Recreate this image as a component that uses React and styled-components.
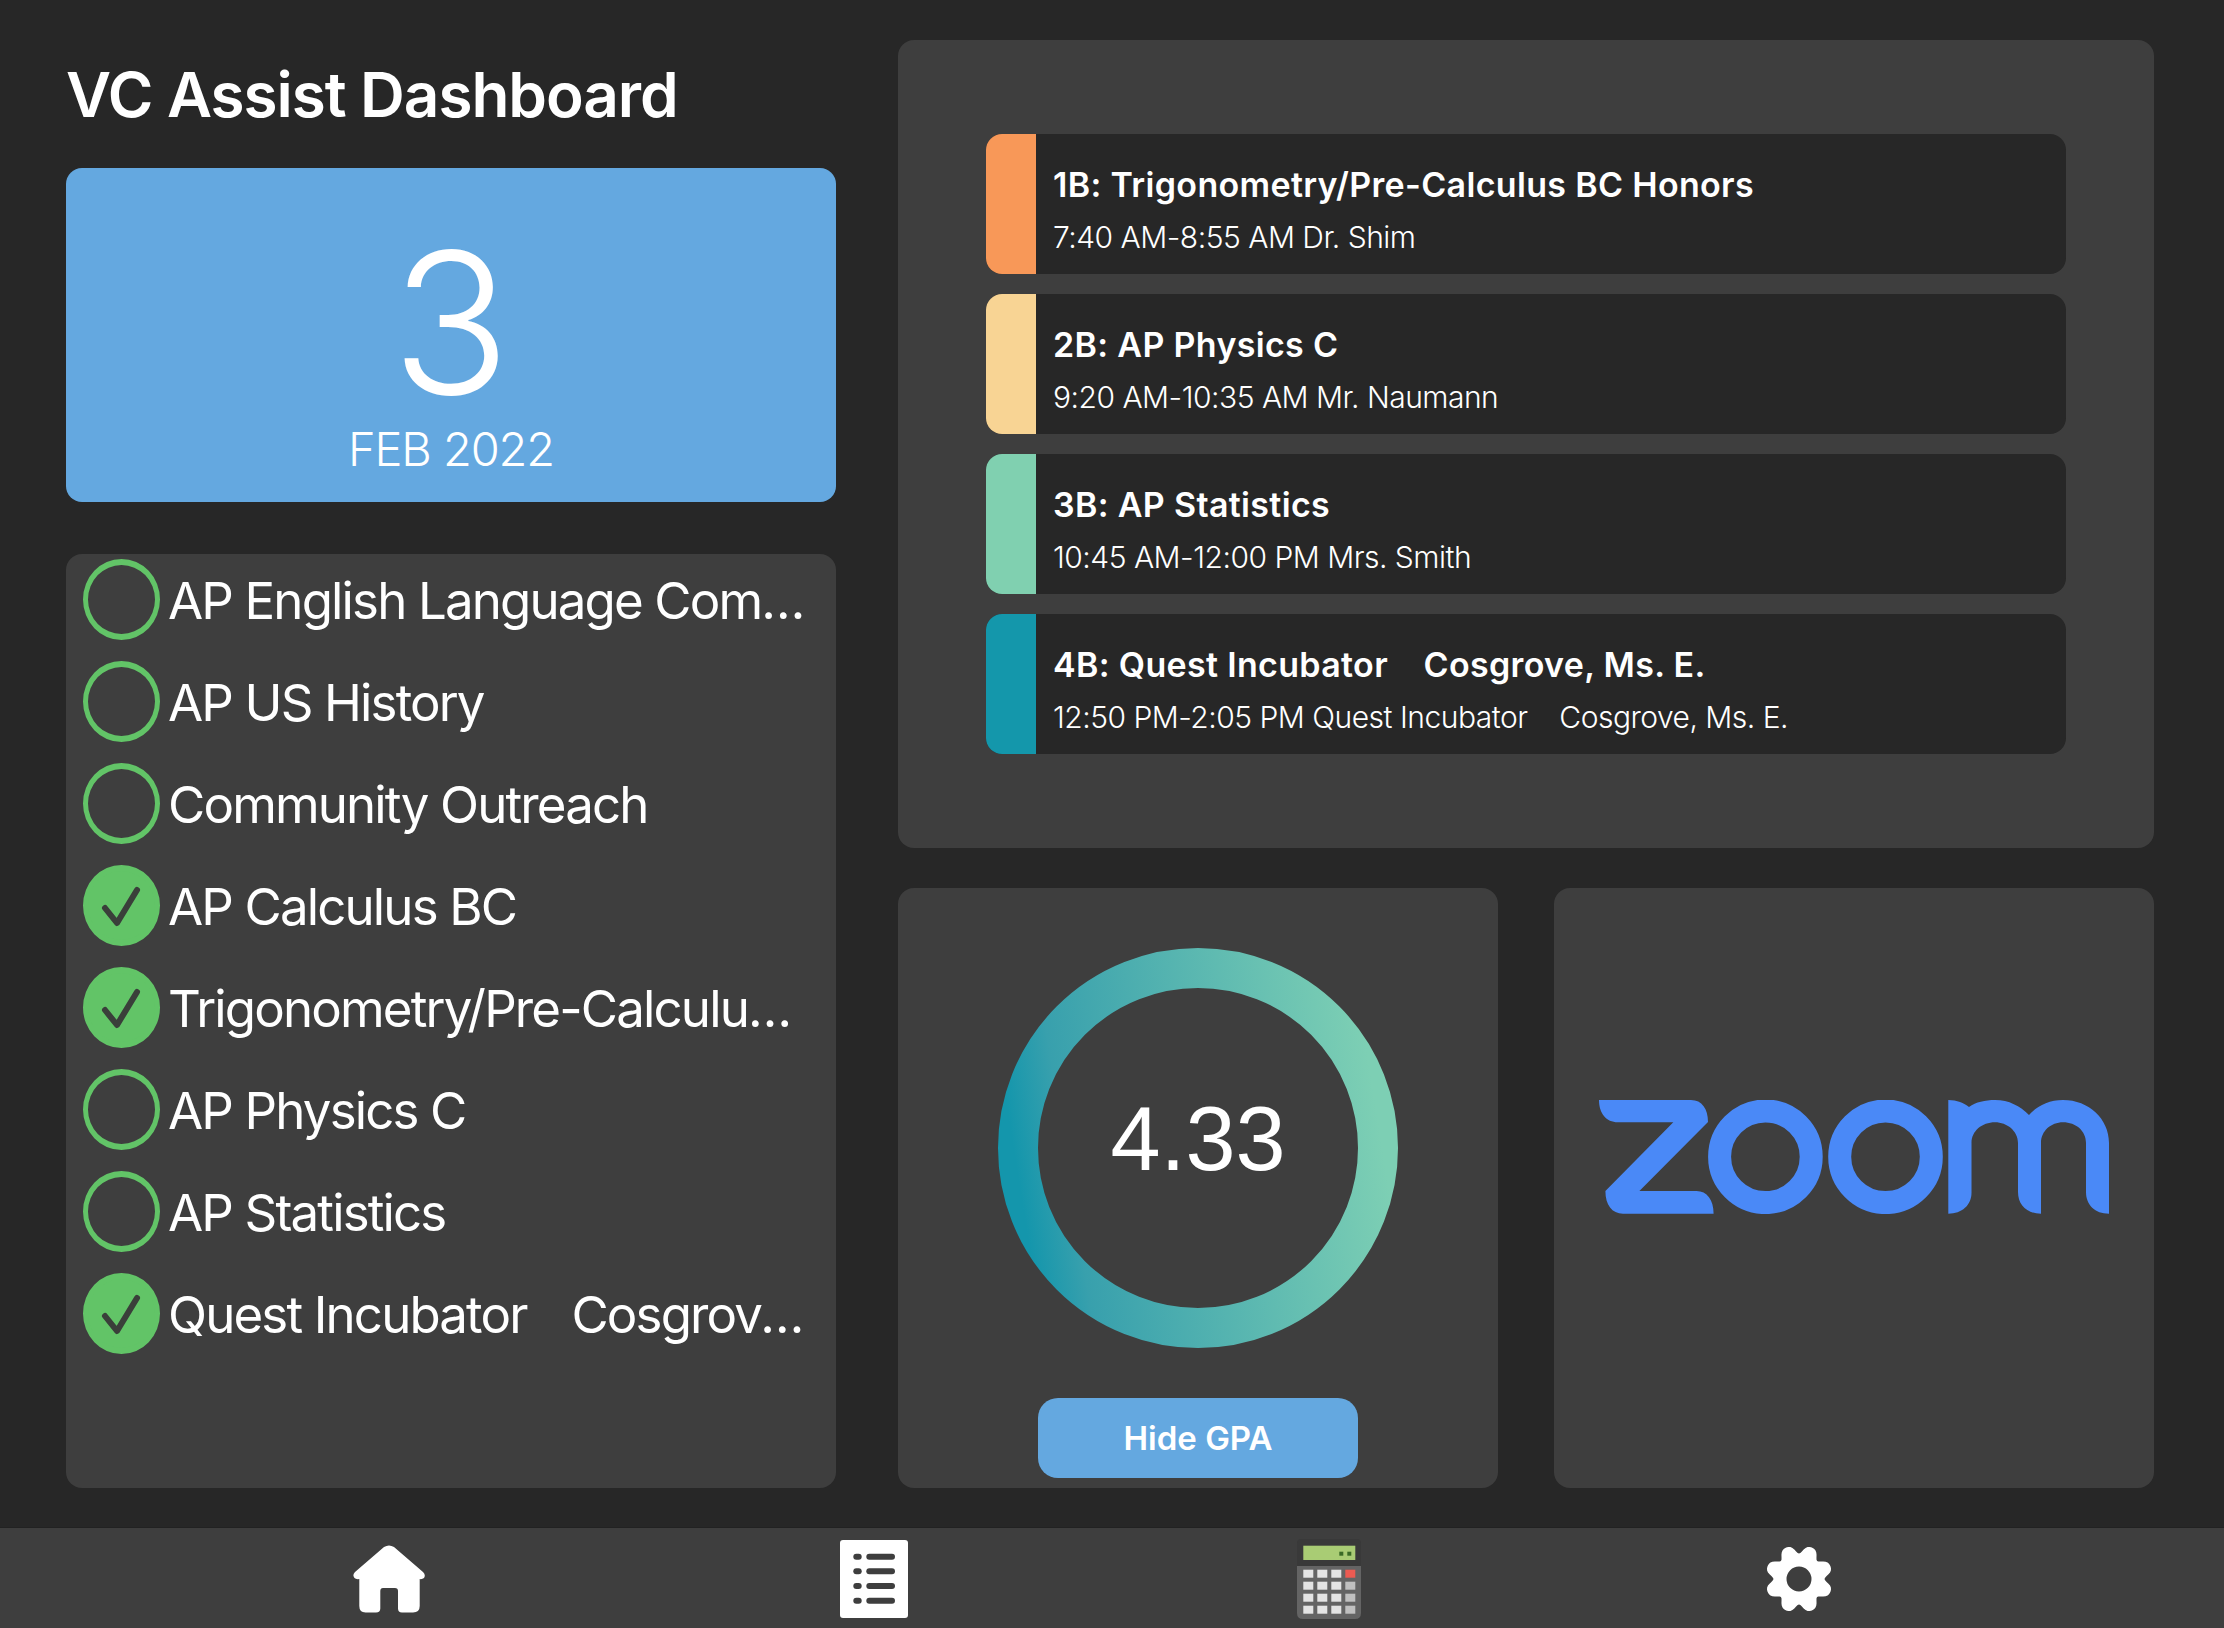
import React from "react";
import styled, { createGlobalStyle } from "styled-components";

const GlobalStyle = createGlobalStyle`
  html, body {
    margin: 0;
    padding: 0;
    background: #272727;
  }
  body {
    font-family: Inter, "Liberation Sans", sans-serif;
    color: #ffffff;
  }
`;

const Page = styled.div`
  display: flex;
  flex-direction: column;
  width: 2224px;
  height: 1628px;
  overflow: hidden;
`;

const Main = styled.main`
  display: grid;
  grid-template-columns: 770px 1256px;
  column-gap: 62px;
  height: 1527px;
  padding: 40px 70px 39px 66px;
  box-sizing: border-box;
`;

const LeftColumn = styled.section`
  display: flex;
  flex-direction: column;
`;

const RightColumn = styled.section`
  display: flex;
  flex-direction: column;
  gap: 40px;
`;

const Title = styled.h1`
  height: 128px;
  margin: 0;
  padding-top: 24px;
  box-sizing: border-box;
  font-size: 62px;
  line-height: 62px;
  font-weight: 600;
  letter-spacing: -1.05px;
`;

const DateCard = styled.div`
  display: flex;
  flex-direction: column;
  align-items: center;
  height: 334px;
  padding-top: 57px;
  box-sizing: border-box;
  background: #64a8e0;
  border-radius: 16px;
`;

const DateNumber = styled.div`
  font-size: 196px;
  line-height: 196px;
  font-weight: 300;
`;

const DateMonth = styled.div`
  margin-top: 4px;
  font-size: 47px;
  line-height: 47px;
  font-weight: 300;
  letter-spacing: -1.1px;
`;

const TaskCard = styled.div`
  display: flex;
  flex-direction: column;
  gap: 21px;
  height: 934px;
  margin-top: 52px;
  padding: 5px 0 0 17px;
  box-sizing: border-box;
  background: #3e3e3e;
  border-radius: 16px;
`;

const TaskRow = styled.div`
  display: flex;
  align-items: center;
  gap: 8px;
  height: 81px;
`;

const TaskCircle = styled.div`
  flex: none;
  display: flex;
  width: 77px;
  height: 81px;
  box-sizing: border-box;
  border-style: solid;
  border-color: #62c467;
  border-width: 6px 5px;
  border-radius: 50%;
  background: ${(p) => (p.$done ? "#62c467" : "transparent")};
`;

const TaskName = styled.div`
  width: 640px;
  padding-top: 2px;
  font-size: 51px;
  font-weight: 400;
  line-height: 62px;
  letter-spacing: -1.85px;
  white-space: pre;
  overflow: hidden;
  text-overflow: ellipsis;
`;

const ScheduleCard = styled.div`
  display: flex;
  flex-direction: column;
  gap: 20px;
  height: 808px;
  padding: 94px 88px 0 88px;
  box-sizing: border-box;
  background: #3e3e3e;
  border-radius: 16px;
`;

const ClassRow = styled.div`
  display: flex;
  height: 140px;
  background: #272727;
  border-radius: 16px;
  overflow: hidden;
`;

const ClassColor = styled.div`
  flex: none;
  width: 50px;
  background: ${(p) => p.$color};
`;

const ClassInfo = styled.div`
  padding: 31px 0 0 17px;
`;

const ClassName = styled.div`
  font-size: 34px;
  line-height: 40px;
  font-weight: 600;
  letter-spacing: 0.33px;
  white-space: pre;
`;

const ClassTime = styled.div`
  margin-top: 14px;
  font-size: 30px;
  line-height: 36px;
  font-weight: 300;
  letter-spacing: -0.5px;
  white-space: pre;
`;

const BottomRow = styled.div`
  display: grid;
  grid-template-columns: 600px 600px;
  column-gap: 56px;
  height: 600px;
`;

const GpaCard = styled.div`
  display: flex;
  flex-direction: column;
  align-items: center;
  padding-top: 60px;
  box-sizing: border-box;
  background: #3e3e3e;
  border-radius: 16px;
`;

const RingWrap = styled.div`
  display: grid;
  width: 400px;
  height: 400px;
  & > * {
    grid-area: 1 / 1;
  }
`;

const GpaValue = styled.div`
  justify-self: center;
  margin-top: 141px;
  font-family: "Liberation Sans", Arial, sans-serif;
  font-size: 90px;
  line-height: 100px;
`;

const HideButton = styled.button`
  width: 320px;
  height: 80px;
  margin-top: 50px;
  border: 0;
  border-radius: 20px;
  background: #64a8e0;
  color: #ffffff;
  font-family: inherit;
  font-size: 33px;
  font-weight: 600;
`;

const ZoomCard = styled.div`
  display: flex;
  justify-content: center;
  padding-top: 212px;
  box-sizing: border-box;
  background: #3e3e3e;
  border-radius: 16px;
`;

const TabBar = styled.nav`
  display: flex;
  align-items: center;
  height: 101px;
  padding: 1px 0 0 353px;
  box-sizing: border-box;
  background: #3e3e3e;
  border-top: 1px solid #222222;
`;

const Tab = styled.div`
  display: flex;
  margin-left: ${(p) => p.$gap || 0}px;
`;

const tasks = [
  { name: "AP English Language Composition", done: false },
  { name: "AP US History", done: false },
  { name: "Community Outreach", done: false },
  { name: "AP Calculus BC", done: true },
  { name: "Trigonometry/Pre-Calculus BC Honors", done: true },
  { name: "AP Physics C", done: false },
  { name: "AP Statistics", done: false },
  { name: "Quest Incubator   \u2009Cosgrove, Ms. E.", done: true },
];

const classes = [
  {
    color: "#f89858",
    name: "1B: Trigonometry/Pre-Calculus BC Honors",
    time: "7:40 AM-8:55 AM Dr. Shim",
  },
  {
    color: "#f8d494",
    name: "2B: AP Physics C",
    time: "9:20 AM-10:35 AM Mr. Naumann",
  },
  {
    color: "#80d0b0",
    name: "3B: AP Statistics",
    time: "10:45 AM-12:00 PM Mrs. Smith",
  },
  {
    color: "#1497ab",
    name: "4B: Quest Incubator    Cosgrove, Ms. E.",
    time: "12:50 PM-2:05 PM Quest Incubator    Cosgrove, Ms. E.",
  },
];

const Check = () => (
  <svg width="67" height="69" viewBox="0 1 67 69" fill="none">
    <path
      d="M17 38 L29 53 L49 20"
      stroke="#3a3f3a"
      strokeWidth="6"
      strokeLinecap="round"
      strokeLinejoin="round"
    />
  </svg>
);

const Ring = () => (
  <svg width="400" height="400" viewBox="0 0 400 400">
    <defs>
      <linearGradient id="gpa" x1="0" y1="0.58" x2="1" y2="0.42">
        <stop offset="0" stopColor="#1496ac" />
        <stop offset="0.14" stopColor="#38a0ad" />
        <stop offset="1" stopColor="#7dcfb4" />
      </linearGradient>
    </defs>
    <circle cx="200" cy="200" r="180" fill="none" stroke="url(#gpa)" strokeWidth="40" />
  </svg>
);

const ZoomLogo = () => (
  <svg width="510" height="114" viewBox="0 0 510 114" fill="#4a89f7">
    <path d="M0 0H92C103 0 109 9 109 22L40.4 91H97.5C108 91 114.6 100 114.6 113.7H24C13 113.7 6.4 105 6.4 91L74.3 22.3H19C7 22.3 0 13 0 0Z" />
    <circle cx="166.4" cy="56.8" r="45.8" fill="none" stroke="#4a89f7" strokeWidth="23" />
    <circle cx="286.5" cy="56.8" r="45.8" fill="none" stroke="#4a89f7" strokeWidth="23" />
    <path d="M349.3 0C358 0 365 3 370 7C377 2 386 0 396 0C410 0 421 6 430 15C438 6 450 0 464 0C490 0 510 19 510 43V113.7C496 113.7 487 105 487 92V43C487 31 477 22.3 464 22.3C452 22.3 442 31 442 43V113.7C428 113.7 419 105 419 92V43C419 31 408 22.3 396 22.3C383 22.3 372.5 31 372.5 43V93C372.5 105 363 113.7 349.3 113.7Z" />
  </svg>
);

const HomeIcon = () => (
  <svg width="72" height="68" viewBox="0 0 72 68" fill="#ffffff">
    <path d="M31 2Q36 -1 41 2L70 27Q73 30 71 33Q69 34.5 66.7 34V61Q66.7 67.5 60 67.5H49Q45 67.5 45 63.5V46Q45 43 42 43H30Q27.3 43 27.3 46V63.5Q27.3 67.5 23 67.5H12.5Q6.3 67.5 6.3 61V34Q3 34.5 1.5 33Q-1 30 2 27Z" />
  </svg>
);

const ListIcon = () => (
  <svg width="68" height="78" viewBox="0 0 68 78">
    <rect width="68" height="78" rx="3" fill="#ffffff" />
    {[16.7, 31.3, 46, 60.7].map((y) => (
      <g key={y} fill="#3e3e3e">
        <rect x="13.3" y={y - 3} width="8.4" height="6" rx="3" />
        <rect x="26.3" y={y - 3} width="28.7" height="6" rx="3" />
      </g>
    ))}
  </svg>
);

const CalcIcon = () => (
  <svg width="64" height="80" viewBox="0 0 64 80">
    <path d="M4 0H60Q64 0 64 4V27H0V4Q0 0 4 0Z" fill="#393939" />
    <path d="M0 27H64V74Q64 80 58 80H6Q0 80 0 74Z" fill="#646464" />
    <rect x="6.3" y="6.7" width="52" height="14.3" fill="#a9cc74" />
    <rect x="42.3" y="12.7" width="4" height="4" fill="#3a6a25" />
    <rect x="50.3" y="12.7" width="4" height="4" fill="#3a6a25" />
    {[30.7, 42.7, 54.7, 66.7].map((y, row) =>
      [6.3, 20.3, 34.3, 48.3].map((x, col) => (
        <rect
          key={`${row}-${col}`}
          x={x}
          y={y}
          width="10"
          height="8"
          fill={col < 3 ? "#e4e4e4" : row === 0 ? "#ec5b52" : "#c0c0c0"}
        />
      ))
    )}
  </svg>
);

// gear outline from a polar curve, eight lobes sitting between the axes
const gearPath = () => {
  const pts = [];
  for (let deg = 0; deg < 360; deg += 3) {
    const t = (deg * Math.PI) / 180;
    const w = Math.cos(8 * (t - Math.PI / 8));
    const r = 30.5 + 4.2 * w - 0.8 * Math.cos(16 * (t - Math.PI / 8));
    pts.push(`${(32 + r * Math.cos(t)).toFixed(2)} ${(32 + r * Math.sin(t)).toFixed(2)}`);
  }
  return `M${pts.join("L")}Z M44.5 32A12.5 12.5 0 1 0 19.5 32A12.5 12.5 0 1 0 44.5 32Z`;
};

const GearIcon = () => (
  <svg width="64" height="64" viewBox="0 0 64 64">
    <path d={gearPath()} fill="#ffffff" fillRule="evenodd" />
  </svg>
);

export default function App() {
  return (
    <Page>
      <GlobalStyle />
      <Main>
        <LeftColumn>
          <Title>VC Assist Dashboard</Title>
          <DateCard>
            <DateNumber>3</DateNumber>
            <DateMonth>FEB 2022</DateMonth>
          </DateCard>
          <TaskCard>
            {tasks.map((t) => (
              <TaskRow key={t.name}>
                <TaskCircle $done={t.done}>{t.done && <Check />}</TaskCircle>
                <TaskName>{t.name}</TaskName>
              </TaskRow>
            ))}
          </TaskCard>
        </LeftColumn>
        <RightColumn>
          <ScheduleCard>
            {classes.map((c) => (
              <ClassRow key={c.name}>
                <ClassColor $color={c.color} />
                <ClassInfo>
                  <ClassName>{c.name}</ClassName>
                  <ClassTime>{c.time}</ClassTime>
                </ClassInfo>
              </ClassRow>
            ))}
          </ScheduleCard>
          <BottomRow>
            <GpaCard>
              <RingWrap>
                <Ring />
                <GpaValue>4.33</GpaValue>
              </RingWrap>
              <HideButton>Hide GPA</HideButton>
            </GpaCard>
            <ZoomCard>
              <ZoomLogo />
            </ZoomCard>
          </BottomRow>
        </RightColumn>
      </Main>
      <TabBar>
        <Tab><HomeIcon /></Tab>
        <Tab $gap={415}><ListIcon /></Tab>
        <Tab $gap={389}><CalcIcon /></Tab>
        <Tab $gap={406}><GearIcon /></Tab>
      </TabBar>
    </Page>
  );
}
